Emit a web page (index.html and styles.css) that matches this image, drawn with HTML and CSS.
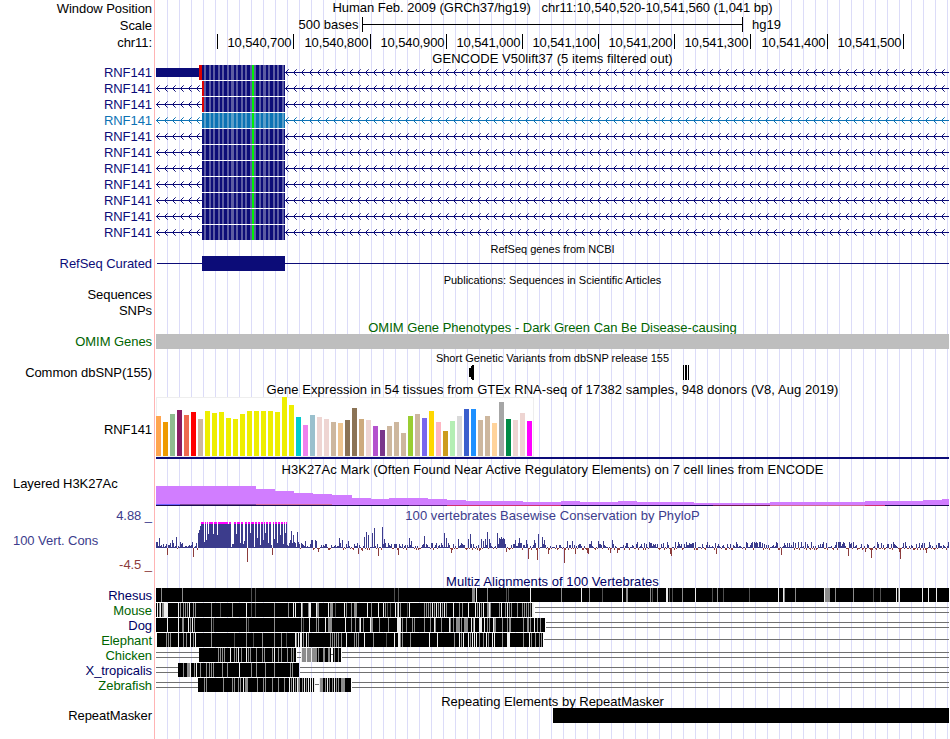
FILE: index.html
```
<!DOCTYPE html>
<html lang="en">
<head>
  <meta charset="UTF-8" />
  <title>Human chr11:10,540,520-10,541,560</title>
  <meta name="viewport" content="width=device-width, initial-scale=1" />
  <link rel="stylesheet" href="styles.css">
</head>
<body>
  <div class="browser">
    <div class="row head">
      <div class="label">Window Position</div>
      <div class="title position">Human Feb. 2009 (GRCh37/hg19) &nbsp; chr11:10,540,520-10,541,560 (1,041 bp)</div>
    </div>
    <div class="row head">
      <div class="label">Scale</div>
      <svg class="plot" id="scale" viewBox="156 17 793 17" width="793" height="17"></svg>
    </div>
    <div class="row head">
      <div class="label">chr11:</div>
      <svg class="plot" id="ruler" viewBox="156 34 793 17" width="793" height="17"></svg>
    </div>

    <div class="row gencode-title"><div class="title wide">GENCODE V50lift37 (5 items filtered out)</div></div>
    <div id="genes"></div>

    <div class="row"><div class="title low small">RefSeq genes from NCBI</div></div>
    <div class="row track">
      <div class="label navy">RefSeq Curated</div>
      <svg class="plot" id="refseq" viewBox="156 0 793 16" width="793" height="16"></svg>
    </div>

    <div class="row"><div class="title low small">Publications: Sequences in Scientific Articles</div></div>
    <div class="row track"><div class="label">Sequences</div></div>
    <div class="row track"><div class="label">SNPs</div></div>

    <div class="row"><div class="title low green">OMIM Gene Phenotypes - Dark Green Can Be Disease-causing</div></div>
    <div class="row track">
      <div class="label green">OMIM Genes</div>
      <div class="plot omim-bar"></div>
    </div>

    <div class="row"><div class="title low small">Short Genetic Variants from dbSNP release 155</div></div>
    <div class="row track">
      <div class="label">Common dbSNP(155)</div>
      <svg class="plot" id="dbsnp" viewBox="156 0 793 16" width="793" height="16"></svg>
    </div>

    <div class="row gtex-title"><div class="title low wide">Gene Expression in 54 tissues from GTEx RNA-seq of 17382 samples, 948 donors (V8, Aug 2019)</div></div>
    <div class="row gtex-row">
      <div class="label">RNF141</div>
      <svg class="plot" id="gtex" viewBox="156 397 793 64" width="793" height="64"></svg>
    </div>

    <div class="row"><div class="title low wide">H3K27Ac Mark (Often Found Near Active Regulatory Elements) on 7 cell lines from ENCODE</div></div>
    <div class="row h3k-row">
      <div class="label left">Layered H3K27Ac</div>
      <svg class="plot" id="h3k" viewBox="156 476 793 32" width="793" height="32"></svg>
    </div>

    <div class="row cons-row">
      <div class="cons-labels">
        <div class="label blue">4.88 _</div>
        <div class="label blue left">100 Vert. Cons</div>
        <div class="label brown">-4.5 _</div>
      </div>
      <div class="cons-plot">
        <div class="title blue wide">100 vertebrates Basewise Conservation by PhyloP</div>
        <svg class="plot" id="phylop" viewBox="156 522 793 52" width="793" height="52"></svg>
      </div>
    </div>

    <div class="row"><div class="title low dark wide">Multiz Alignments of 100 Vertebrates</div></div>
    <div id="multiz"></div>

    <div class="row"><div class="title low">Repeating Elements by RepeatMasker</div></div>
    <div class="row track">
      <div class="label">RepeatMasker</div>
      <div class="plot repeat-bar"></div>
    </div>
  </div>

  <script src="tracks.js"></script>
</body>
</html>
```
FILE: styles.css
```
:root {
  --navy: #0c0c78;
  --green: #006400;
  --blue: #3c3c8c;
  --brown: #8c3c3c;
  --grid: #dcdcf8;
  --edge: #ffb4b4;
}

* {
  box-sizing: border-box;
  margin: 0;
  padding: 0;
}

body {
  background: #fff;
  color: #000;
  font-family: 'Liberation Sans', Arial, sans-serif;
  font-size: 13px;
  overflow: hidden;
}

/* red edge line plus the light vertical guidelines */
.browser {
  width: 949px;
  height: 739px;
  background:
    linear-gradient(var(--edge), var(--edge)) 154px 0 / 1px 100% no-repeat,
    repeating-linear-gradient(to right, var(--grid) 0, var(--grid) 1px, transparent 1px, transparent 12px) 167px 0 / 792px 100% no-repeat;
}

.row {
  display: grid;
  grid-template-columns: 152px 793px;
  column-gap: 4px;
  height: 15px;
}

.row.head {
  height: 17px;
}

.head .label {
  padding-top: 1px;
}

.row.gencode-title {
  height: 14px;
}

.row.track,
#genes .row,
.row.gtex-title {
  height: 16px;
}

.label {
  grid-column: 1;
  text-align: right;
  line-height: 15px;
  white-space: nowrap;
  letter-spacing: -0.06px;
}

.label.left {
  text-align: left;
  padding-left: 13px;
}

.title {
  grid-column: 2;
  text-align: center;
  line-height: 15px;
  white-space: pre;
}

.position {
  letter-spacing: -0.04px;
}

.low {
  padding-top: 1px;
}

.wide {
  letter-spacing: 0.05px;
}

.small {
  font-size: 11px;
}

.plot {
  grid-column: 2;
  display: block;
  shape-rendering: crispEdges;
}

svg text {
  font-size: 13px;
}

.navy { color: var(--navy); }
.green { color: var(--green); }
.blue { color: var(--blue); }
.brown { color: var(--brown); }
.dark { color: #000064; }
.sky { color: #0c72b4; }

.omim-bar {
  height: 15px;
  background: #bebebe;
}

.row.gtex-row {
  height: 64px;
}

.gtex-row .label {
  padding-top: 25px;
}

.row.h3k-row {
  height: 32px;
}

.row.cons-row {
  height: 65px;
}

.cons-labels {
  display: flex;
  flex-direction: column;
  gap: 9.5px;
}

.cons-plot {
  grid-column: 2;
}

.cons-plot .title {
  height: 14px;
}

.repeat-bar {
  height: 15px;
  margin-left: 397px;
  background: #000;
}
```
FILE: tracks.js
```
const LEFT = 156;
const RIGHT = 949;

function rect(x, y, w, h, fill) {
  return `<rect x="${x}" y="${y}" width="${w}" height="${h}" fill="${fill}"/>`;
}

function draw(id, html) {
  document.getElementById(id).innerHTML = html;
}

function row(name, cls, height, html) {
  return `<div class="row"><div class="label ${cls}">${name}</div>` +
    `<svg class="plot" viewBox="156 0 793 ${height}" width="793" height="${height}">${html}</svg></div>`;
}

// Scale bar and base ruler
draw('scale',
  '<text x="358.5" y="29" text-anchor="end">500 bases</text>' +
  rect(362, 17, 1, 15, '#000') + rect(362, 24, 381, 1, '#000') + rect(742, 17, 1, 15, '#000') +
  '<text x="752" y="29">hg19</text>');

const ticks = [217, 293, 370, 446, 522, 598, 674, 750, 827, 903];
draw('ruler', ticks.map((x, i) => {
  const pos = '10,' + (540600 + i * 100).toLocaleString('en-US');
  const text = i ? `<text x="${x - 1.5}" y="46.5" text-anchor="end" textLength="64">${pos}</text>` : '';
  return rect(x, 34, 1, 15, '#000') + text;
}).join(''));

// Gene models
function chevrons(from, to, color, soft) {
  let html = rect(from, 7, to - from, 1, color);
  for (let x = from; x + 3 < to; x += 8) {
    for (let d = 1; d <= 3; d++) {
      const fill = d === 3 ? soft : color;
      html += rect(x + d, 7 - d, 1, 1, fill) + rect(x + d, 7 + d, 1, 1, fill);
    }
  }
  return html;
}

function gene(i) {
  const color = i === 3 ? '#0c72b4' : '#0c0c78';
  const light = i === 3 ? '#5a9ec8' : '#5c5ca2';
  let html = chevrons(285, RIGHT, color, light);
  html += i === 0 ? rect(LEFT, 3, 43, 9, color) + rect(199, 0, 3, 15, '#dc0000') : chevrons(156, 202, color, light);
  html += rect(202, 0, 83, 15, color);
  for (let x = 204; x < 284; x += 4.57) {
    const start = Math.round(x);
    html += rect(start, 0, Math.round(x + 2.2) - start, 15, light);
  }
  if (i === 1 || i === 2) html += rect(202, 0, 2, 15, '#dc0000');
  html += rect(252, 0, 2, 15, '#00f000');
  return row('RNF141', i === 3 ? 'sky' : 'navy', 16, html);
}

draw('genes', Array.from({ length: 11 }, (_, i) => gene(i)).join(''));
draw('refseq', rect(157, 7, 792, 1, '#0c0c78') + rect(202, 0, 83, 15, '#0c0c78'));
draw('dbsnp', rect(469, 3, 2, 9, '#000') + rect(471, 1, 1, 13, '#000') + rect(472, 0, 2, 15, '#000') +
  rect(683, 0, 1, 15, '#000') + rect(685, 0, 2, 15, '#000') + rect(688, 0, 1, 15, '#000'));

// GTEx: bar height and tissue colour
const gtex = [
  [40, '#ffa54f'], [34, '#ee9a00'], [42, '#8fbc8f'], [46, '#8b1c62'], [41, '#ee6a50'], [44, '#ff0000'],
  [37, '#cdb79e'], [45, '#eeee00'], [43, '#eeee00'], [44, '#eeee00'], [38, '#eeee00'], [37, '#eeee00'],
  [42, '#eeee00'], [45, '#eeee00'], [45, '#eeee00'], [45, '#eeee00'], [45, '#eeee00'], [44, '#eeee00'],
  [59, '#eeee00'], [51, '#eeee00'], [39, '#00cdcd'], [31, '#ee82ee'], [41, '#9ac0cd'], [39, '#eed5d2'],
  [37, '#eed5d2'], [34, '#cdb79e'], [33, '#eec591'], [36, '#8b7355'], [48, '#8b7355'], [37, '#cdaa7d'],
  [36, '#eed5d2'], [30, '#b452cd'], [26, '#7a378b'], [30, '#cdb79e'], [34, '#cdb79e'], [23, '#cdb79e'],
  [40, '#9acd32'], [42, '#cdb79e'], [38, '#7a67ee'], [45, '#ffd700'], [34, '#ffb6c1'], [25, '#cd9b1d'],
  [35, '#b4eeb4'], [40, '#d9d9d9'], [47, '#3a5fcd'], [47, '#1e90ff'], [36, '#cdb79e'], [40, '#cdb79e'],
  [33, '#ffd39b'], [54, '#a6a6a6'], [37, '#008b45'], [36, '#eed5d2'], [43, '#eed5d2'], [35, '#ff00ff']
];
draw('gtex',
  rect(156, 397, 378, 60, '#eeeeee') + rect(157, 398, 376, 58, '#fff') +
  gtex.map(([h, color], i) => rect(LEFT + i * 7, 456 - h, 5, h, color)).join('') +
  rect(LEFT, 457, 793, 2, '#0c0c78'));

// H3K27Ac signal, [x, top]
const signal = [
  [156, 486], [256, 489], [275, 491], [294, 493], [313, 494], [332, 495], [352, 498], [371, 499],
  [389, 498], [428, 499], [447, 500], [466, 501], [523, 502], [561, 501], [580, 502], [618, 501],
  [637, 502], [694, 503], [770, 502], [865, 501], [923, 500], [942, 499], [949, 499]
];
let h3k = '';
for (let i = 0; i < signal.length - 1; i++) {
  const [x, y] = signal[i];
  h3k += rect(x, y, signal[i + 1][0] - x, 505 - y, '#d17dff');
}
h3k += rect(156, 504, 24, 1, '#7060ff') + rect(180, 504, 76, 1, '#7a4a9c') + rect(256, 504, 76, 1, '#cf6a9c');
h3k += rect(156, 505, 793, 1, '#1c0c50') + rect(409, 505, 38, 1, '#5a2080') + rect(447, 505, 114, 1, '#d03070') +
  rect(713, 505, 57, 1, '#701c50') + rect(770, 505, 95, 1, '#d06890') + rect(865, 505, 20, 1, '#d03070');
draw('h3k', h3k);

// PhyloP conservation per column; low background with the main peaks set by position
const scores = {};
let seed = 7;
function rand() {
  seed = (seed * 16807) % 2147483647;
  return seed / 2147483647;
}
for (let x = LEFT; x < RIGHT; x++) {
  const r = rand();
  const cap = x > 630 ? 6 : 5;
  scores[x] = r < 0.32 ? -Math.ceil(rand() * 2) : Math.ceil(Math.pow(rand(), 1.6) * cap);
}
const peaks = {
  156: 6, 157: 6, 159: 10, 163: 4, 167: -7, 172: 8, 173: 5, 176: 11, 180: 6, 181: 4, 192: 6, 193: -9,
  289: 5, 290: 8, 291: 17, 293: 13, 294: 6, 297: 16, 298: 6, 301: 5, 305: 7, 311: 8, 315: 8, 318: -4,
  312: 8, 316: 7, 339: 10, 342: 8, 348: 7, 358: -6, 362: -3, 364: 11, 366: 16, 368: 13, 372: 15, 374: 20,
  378: -8, 382: 21, 384: 9, 388: 5, 398: -7, 409: 10, 411: 7, 424: 12, 432: 5, 444: 15, 446: 10, 451: -5,
  458: 9, 468: 9, 470: 14, 479: -3, 481: 9, 483: 7, 485: 9, 487: 16, 489: 9, 497: 15, 499: 10, 500: 9,
  501: 11, 502: 9, 503: 10, 504: 9, 506: -4, 515: 8, 519: 10, 526: 8, 528: -11, 534: 8, 537: -12, 538: 14,
  542: 11, 544: 8, 548: -6, 564: -15, 567: 7, 572: 7, 575: -6, 587: -5, 588: -6, 591: 7, 598: 7, 603: 7,
  610: -5, 612: 8, 617: -5, 637: 6, 644: 5, 670: -6, 671: -8, 716: -6, 754: 6, 755: 5, 756: 6, 757: 5,
  759: 6, 760: 6, 781: -7, 801: 6, 805: 6, 836: 6, 838: 6, 840: 6, 843: 6, 848: -8, 865: -4, 871: -10,
  899: -4, 900: -11, 926: -5
};
Object.assign(scores, peaks);

const dips = {
  204: 6, 206: 8, 208: 14, 213: 14, 217: 13, 228: 24, 231: 1, 232: 4, 233: 4, 236: 14, 240: 5, 243: 4,
  244: 7, 247: 0, 250: 15, 254: 1, 257: 10, 260: 3, 263: 8, 265: 15, 268: 5, 271: 3, 274: 9, 277: 5,
  280: 13, 283: 4, 285: 15
};
for (let x = 198; x < 287; x++) {
  scores[x] = x in dips ? dips[x] : x < 201 ? [15, 18, 22][x - 198] : 26;
}
scores[247] = -14;
scores[272] = -7;

let phylop = '';
for (let x = LEFT; x < RIGHT; x++) {
  const s = scores[x];
  if (s >= 0) {
    phylop += rect(x, 548 - s, 1, s, '#3c3c8c');
    if (s === 26) phylop += rect(x, 522, 1, 2, '#ff00ff');
  } else {
    phylop += rect(x, 548, 1, -s, '#8c3c3c');
  }
}
draw('phylop', phylop);

// Multiz alignments. marks: position, shade (w, g, d) and optional width
const shades = { w: '#eeeeee', g: '#8c8c8c', d: '#505050' };
const species = [
  { name: 'Rhesus', cls: 'dark', blocks: [[156, 949]], lines: [],
    marks: '161g 182g 251d 255d 394d 398d 472g3 476w 487g 506d 508d 530w 561g 581w 589g 602d 622w 626g2 650g 652d 657g 666w2 669d 672d 682g 695w 712d 717g 723d 749d 778w 783w 784g 795g 824w 825g5 835g 853g 873d 880d 896w 898g 899w 922w 928w 936w' },
  { name: 'Mouse', cls: 'green', blocks: [[156, 534]], lines: [[535, 949, 2]],
    marks: '157w 159g 160w 162g2 164w4 178w 180g 183g 185g 187g 189w 193g 195g 211g 220d 232g 246w 251d 255d 274g 288g 293w 295w 301w 302g 308g 309w2 316w 317g2 328w 330g3 335d 344w 346g 351g 354g3 367w 371g 378w 383w 385g 387d 390d 395w 397g 398w 400g 407d 409w 424g 426g 428g 430g 432w 434g 436w 438g 440w 442g 444w 446g 453w 459g 462g 468w 475w 477g 479w 481g 483w 487g2 489w 490g 499g 501w 505g 507w 509g 511g 517g 522g 524g 526g 528g 530g 532w2' },
  { name: 'Dog', cls: 'dark', blocks: [[156, 545]], lines: [[546, 949, 2]],
    marks: '167w 178w 182g2 188w 190g 192w 194g 211g 213d 246g 248d 274g 301g 303d 309w 316g 318g 325w 328g 329g3 345w 351g 355g 359g 360w 363g 370w 371g2 379g 388g 397w 398w3 402g 406g 412g 414g 424g 430g 434w 435g 441g 449w 450g 453g 456g4 461g 464g4 471w 473g 474w 479w 480w2 484w 487g 489g 493w 494g2 502g 507g 509g2 523g 527g2 530g 534w 537g 540g' },
  { name: 'Elephant', cls: 'green', blocks: [[157, 543]], lines: [[544, 949, 1]],
    marks: '166g 168g 170g 178w 183g 186g 190w 193g 195w 211g 234d 246g 253d 262g 274g 281g 286d 295w 296g 298w 300w2 303g 306w 308g 330g 332g 334g 336g 338g 341g 346w 354g 356g 358g 364w 373g 386d 394w 398w2 400g 402g 410g 429w 437w 454g 459w 461g 463w 468w 470g 472w 474w 476w 479g 483g 486w 488g 492w 494w 502g 507w3 523g 529w 531g 535g 539g 541g' },
  { name: 'Chicken', cls: 'green', blocks: [[199, 296], [301, 331], [333, 341]],
    lines: [[156, 199, 2], [297, 301, 2], [331, 333, 1], [342, 949, 2]],
    marks: '218g 220g 222g 224g 230w 234g 236g 238w 241g 246w 248g 250g 256g 262g 264g 272g 274w 278g 281g 287g 291g 293g 301w 302g4 306w 307g4 311w 312g5 318g 323g2 328g 329g 334g 338g' },
  { name: 'X_tropicalis', cls: 'dark', blocks: [[178, 299]], lines: [[156, 178, 2], [300, 949, 2]],
    marks: '183g 187g3 190w 194g 196w 200g 206g 209g 211g 213g 222g 227g 239w 251g 256g 265g 274g 290g 292g' },
  { name: 'Zebrafish', cls: 'green', blocks: [[198, 315], [319, 351]],
    lines: [[156, 198, 2], [315, 319, 1], [352, 949, 2]],
    marks: '204g 206g 223g 232g 234g 238g 240g 243w 245g3 257g 263g 265g 272g 278g 284g 289w 291g 293w 295g 297w 298g2 302g 304w 306g 308w 310w 312w 314w 319w 320g3 325g 327w 329g 332g 334w 336g 338g 341g4' }
];

draw('multiz', species.map(s => {
  let html = '';
  s.lines.forEach(([from, to, count]) => {
    (count === 2 ? [4, 9] : [6]).forEach(y => html += rect(from, y, to - from, 1, '#707070'));
  });
  s.blocks.forEach(([from, to]) => html += rect(from, 0, to - from, 14, '#000'));
  s.marks.split(' ').forEach(mark => {
    const [, x, shade, w] = mark.match(/(\d+)([wgd])(\d*)/);
    html += rect(x, 0, w || 1, 14, shades[shade]);
  });
  return row(s.name, s.cls, 15, html);
}).join(''));
```
